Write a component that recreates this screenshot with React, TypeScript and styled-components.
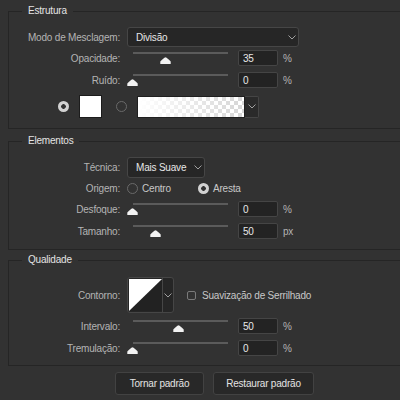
import React from "react";
import styled, { createGlobalStyle } from "styled-components";

const GlobalStyle = createGlobalStyle`
  html, body {
    margin: 0;
    padding: 0;
    background: #323232;
  }
  body {
    font-family: "Liberation Sans", Arial, sans-serif;
    font-size: 10px;
    letter-spacing: -0.2px;
    color: #b4b4b4;
  }
`;

const Page = styled.div`
  width: 400px;
  height: 400px;
  overflow: hidden;
  padding-top: 11px;
  box-sizing: border-box;
`;

const Group = styled.section<{ $pt: number; $pb: number; $mt?: number }>`
  position: relative;
  margin: ${(p) => p.$mt ?? 0}px -30px 0 8px;
  padding: ${(p) => p.$pt}px 0 ${(p) => p.$pb}px;
  border: 1px solid #252525;
`;

const Legend = styled.span`
  position: absolute;
  top: -7px;
  left: 13px;
  padding: 0 6px;
  line-height: 12px;
  background: #323232;
  color: #e4e4e4;
`;

const Row = styled.div<{ $h: number; $mt?: number }>`
  display: flex;
  align-items: center;
  height: ${(p) => p.$h}px;
  margin-top: ${(p) => p.$mt ?? 0}px;
`;

const Label = styled.span`
  flex-shrink: 0;
  width: 111px;
  margin-right: 7px;
  text-align: right;
  white-space: nowrap;
`;

const Select = styled.div<{ $w: number; $h: number }>`
  display: flex;
  align-items: center;
  justify-content: space-between;
  box-sizing: border-box;
  width: ${(p) => p.$w}px;
  height: ${(p) => p.$h}px;
  padding: 0 2px 0 8px;
  background: #262626;
  border: 1px solid #464646;
  border-radius: 3px;
  color: #e6e6e6;
  white-space: nowrap;
`;

const Chevron = styled.svg`
  display: block;
  flex-shrink: 0;
  width: 8px;
  height: 5px;
`;

const SliderBox = styled.div`
  position: relative;
  flex-shrink: 0;
  width: 111px;
  height: 22px;
`;

const Track = styled.div`
  position: absolute;
  left: 6px;
  top: 5px;
  width: 95px;
  height: 2px;
  background: #5b5b5b;
`;

const Thumb = styled.svg`
  position: absolute;
  top: 10px;
  width: 11px;
  height: 7px;
`;

const NumInput = styled.div`
  display: flex;
  align-items: center;
  box-sizing: border-box;
  width: 40px;
  height: 16px;
  padding-left: 4px;
  background: #232323;
  border: 1px solid #454545;
  border-radius: 2px;
  color: #e8e8e8;
`;

const Unit = styled.span`
  margin-left: 5px;
  color: #b4b4b4;
`;

const Radio = styled.span<{ $on?: boolean }>`
  flex-shrink: 0;
  box-sizing: border-box;
  width: 11px;
  height: 11px;
  border-radius: 50%;
  ${(p) =>
    p.$on
      ? "background: radial-gradient(circle, #323232 0 2px, #d2d2d2 2.6px);"
      : "border: 1px solid #6a6a6a;"}
`;

const ColorRow = styled.div`
  display: flex;
  align-items: center;
  height: 23px;
  margin-top: 4px;
  padding-left: 49px;
`;

const Swatch = styled.div`
  box-sizing: border-box;
  width: 23px;
  height: 23px;
  margin: 0 14px 0 10px;
  background: #ffffff;
  border: 1px solid #1c1c1c;
`;

const GradientPicker = styled.div`
  display: flex;
  height: 22px;
  margin-left: 10px;
`;

const GradientBar = styled.div`
  box-sizing: border-box;
  width: 108px;
  border: 1px solid #1f1f1f;
  background: linear-gradient(to right, #ffffff, rgba(255, 255, 255, 0)),
    conic-gradient(#d6d6d6 25%, #ffffff 0 50%, #d6d6d6 0 75%, #ffffff 0) 0 0 / 8px 8px;
`;

const DropButton = styled.div`
  display: flex;
  align-items: center;
  justify-content: center;
  box-sizing: border-box;
  width: 14px;
  background: #2a2a2a;
  border: 1px solid #454545;
  border-left: none;
  border-radius: 0 2px 2px 0;
`;

const Option = styled.label<{ $w?: number }>`
  display: flex;
  align-items: center;
  gap: 4px;
  width: ${(p) => (p.$w ? `${p.$w}px` : "auto")};
  color: #c8c8c8;
`;

const Contour = styled.div`
  display: flex;
  box-sizing: border-box;
  width: 47px;
  height: 36px;
  padding: 1px 0 1px 1px;
  background: #262626;
  border: 1px solid #464646;
  border-radius: 3px;
`;

const ContourPreview = styled.svg`
  display: block;
  width: 33px;
  height: 32px;
`;

const ContourDrop = styled.div`
  display: flex;
  flex: 1;
  align-items: center;
  justify-content: center;
  margin: -1px 0;
  border-left: 1px solid #464646;
`;

const Checkbox = styled.span`
  box-sizing: border-box;
  width: 9px;
  height: 9px;
  margin: 0 6px 0 13px;
  border: 1px solid #7a7a7a;
  border-radius: 2px;
`;

const CheckText = styled.span`
  color: #c8c8c8;
`;

const Buttons = styled.div`
  display: flex;
  gap: 9px;
  margin-top: 6px;
  padding-left: 115px;
`;

const Button = styled.button<{ $w: number }>`
  box-sizing: border-box;
  width: ${(p) => p.$w}px;
  height: 23px;
  padding: 0;
  background: #282828;
  border: 1px solid #424242;
  border-radius: 3px;
  color: #e4e4e4;
  font: inherit;
  letter-spacing: inherit;
`;

function Down() {
  return (
    <Chevron viewBox="0 0 8 5">
      <polyline points="0.5,0.5 4,4 7.5,0.5" fill="none" stroke="#a0a0a0" strokeWidth="1" />
    </Chevron>
  );
}

function Slider({ label, value, pos, unit = "%" }: { label: string; value: string; pos: number; unit?: string }) {
  return (
    <Row $h={22}>
      <Label>{label}</Label>
      <SliderBox>
        <Track />
        <Thumb viewBox="0 0 11 7" style={{ left: 6 + pos * 95 - 6.5 }}>
          <path d="M5.5 0.3 C6.2 0.3 10.7 3.8 10.7 4.8 L10.7 7 L0.3 7 L0.3 4.8 C0.3 3.8 4.8 0.3 5.5 0.3 Z" fill="#f2f2f2" />
        </Thumb>
      </SliderBox>
      <NumInput>{value}</NumInput>
      <Unit>{unit}</Unit>
    </Row>
  );
}

export default function App() {
  return (
    <Page>
      <GlobalStyle />
      <Group $pt={15} $pb={10}>
        <Legend>Estrutura</Legend>
        <Row $h={20}>
          <Label>Modo de Mesclagem:</Label>
          <Select $w={172} $h={20}>
            Divisão
            <Down />
          </Select>
        </Row>
        <Slider label="Opacidade:" value="35" pos={0.35} />
        <Slider label="Ruído:" value="0" pos={0} />
        <ColorRow>
          <Radio $on />
          <Swatch />
          <Radio />
          <GradientPicker>
            <GradientBar />
            <DropButton>
              <Down />
            </DropButton>
          </GradientPicker>
        </ColorRow>
      </Group>

      <Group $mt={12} $pt={15} $pb={7}>
        <Legend>Elementos</Legend>
        <Row $h={21}>
          <Label>Técnica:</Label>
          <Select $w={78} $h={21}>
            Mais Suave
            <Down />
          </Select>
        </Row>
        <Row $h={20}>
          <Label>Origem:</Label>
          <Option $w={71}>
            <Radio />
            Centro
          </Option>
          <Option>
            <Radio $on />
            Aresta
          </Option>
        </Row>
        <Slider label="Desfoque:" value="0" pos={0} />
        <Slider label="Tamanho:" value="50" pos={0.25} unit="px" />
      </Group>

      <Group $mt={10} $pt={16} $pb={6}>
        <Legend>Qualidade</Legend>
        <Row $h={36}>
          <Label>Contorno:</Label>
          <Contour>
            <ContourPreview viewBox="0 0 33 32" preserveAspectRatio="none">
              <rect width="33" height="32" fill="#ffffff" />
              <polygon points="0,32 33,0 33,32" fill="#222222" />
            </ContourPreview>
            <ContourDrop>
              <Down />
            </ContourDrop>
          </Contour>
          <Checkbox />
          <CheckText>Suavização de Serrilhado</CheckText>
        </Row>
        <Row $h={0} $mt={2} />
        <Slider label="Intervalo:" value="50" pos={0.49} />
        <Slider label="Tremulação:" value="0" pos={0} />
      </Group>

      <Buttons>
        <Button $w={89}>Tornar padrão</Button>
        <Button $w={101}>Restaurar padrão</Button>
      </Buttons>
    </Page>
  );
}
